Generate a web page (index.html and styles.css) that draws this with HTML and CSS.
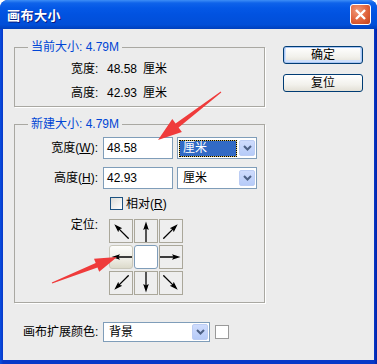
FILE: index.html
```html
<!DOCTYPE html>
<html lang="zh">
<head>
  <meta charset="UTF-8">
  <title>画布大小</title>
  <link rel="stylesheet" href="styles.css">
</head>
<body>

  <div class="window">
    <!-- title bar -->
    <div class="titlebar">
      <span class="title">画布大小</span>
      <span class="close">
        <svg width="13" height="13" viewBox="0 0 13 13"><path d="M2 2L11 11M11 2L2 11" stroke="#fff" stroke-width="2.4"/></svg>
      </span>
    </div>

    <div class="client">
      <!-- current size -->
      <fieldset class="group current">
        <legend>当前大小: 4.79M</legend>
        <div class="info">
          <span>宽度:</span><span>48.58</span><span>厘米</span>
          <span>高度:</span><span>42.93</span><span>厘米</span>
        </div>
      </fieldset>

      <div class="buttons">
        <button class="btn default">确定</button>
        <button class="btn">复位</button>
      </div>

      <!-- new size -->
      <fieldset class="group new">
        <legend>新建大小: 4.79M</legend>
        <div class="form">
          <label>宽度(<u>W</u>):</label>
          <div class="input">48.58</div>
          <div class="select">
            <span class="val hl">厘米</span>
            <span class="drop"><svg width="9" height="6" viewBox="0 0 9 6"><path d="M1 1L4.5 4.5L8 1" fill="none" stroke="#4d6185" stroke-width="2"/></svg></span>
          </div>

          <label>高度(<u>H</u>):</label>
          <div class="input">42.93</div>
          <div class="select">
            <span class="val">厘米</span>
            <span class="drop"><svg width="9" height="6" viewBox="0 0 9 6"><path d="M1 1L4.5 4.5L8 1" fill="none" stroke="#4d6185" stroke-width="2"/></svg></span>
          </div>

          <div class="check-row"><span class="check"></span><span>相对(<u>R</u>)</span></div>

          <label class="anchor-label">定位:</label>
          <div class="anchor">
            <div class="cell"><svg class="nw" viewBox="0 0 22 22"><path d="M0 11H14" stroke="#000" stroke-width="1.3"/><path d="M12 8.2L20.5 11L12 13.8L13.6 11Z"/></svg></div>
            <div class="cell"><svg class="n" viewBox="0 0 22 22"><path d="M0 11H14" stroke="#000" stroke-width="1.3"/><path d="M12 8.2L20.5 11L12 13.8L13.6 11Z"/></svg></div>
            <div class="cell"><svg class="ne" viewBox="0 0 22 22"><path d="M0 11H14" stroke="#000" stroke-width="1.3"/><path d="M12 8.2L20.5 11L12 13.8L13.6 11Z"/></svg></div>
            <div class="cell hover"><svg class="w" viewBox="0 0 22 22"><path d="M0 11H14" stroke="#000" stroke-width="1.3"/><path d="M12 8.2L20.5 11L12 13.8L13.6 11Z"/></svg></div>
            <div class="cell center"></div>
            <div class="cell"><svg class="e" viewBox="0 0 22 22"><path d="M0 11H14" stroke="#000" stroke-width="1.3"/><path d="M12 8.2L20.5 11L12 13.8L13.6 11Z"/></svg></div>
            <div class="cell"><svg class="sw" viewBox="0 0 22 22"><path d="M0 11H14" stroke="#000" stroke-width="1.3"/><path d="M12 8.2L20.5 11L12 13.8L13.6 11Z"/></svg></div>
            <div class="cell"><svg class="s" viewBox="0 0 22 22"><path d="M0 11H14" stroke="#000" stroke-width="1.3"/><path d="M12 8.2L20.5 11L12 13.8L13.6 11Z"/></svg></div>
            <div class="cell"><svg class="se" viewBox="0 0 22 22"><path d="M0 11H14" stroke="#000" stroke-width="1.3"/><path d="M12 8.2L20.5 11L12 13.8L13.6 11Z"/></svg></div>
          </div>
        </div>
      </fieldset>

      <!-- canvas extension colour -->
      <div class="ext-row">
        <span class="ext-label">画布扩展颜色:</span>
        <div class="select wide">
          <span class="val">背景</span>
          <span class="drop"><svg width="9" height="6" viewBox="0 0 9 6"><path d="M1 1L4.5 4.5L8 1" fill="none" stroke="#4d6185" stroke-width="2"/></svg></span>
        </div>
        <span class="swatch"></span>
      </div>
    </div>

    <!-- red annotation arrows -->
    <svg class="marks" width="377" height="364" viewBox="0 0 377 364">
      <polygon points="220.7,91.6 175.6,123.5 172.3,119.1 158,140 181.9,131.9 178.6,127.5 221.3,92.4" />
      <polygon points="51.8,282.5 95.7,262.9 94,258.7 117,257 99.2,271.7 97.5,267.5 52.2,283.5" />
    </svg>
  </div>

</body>
</html>
```

FILE: styles.css
```css
* {
  margin: 0;
  padding: 0;
  box-sizing: border-box;
}

html, body {
  background: #ffffff;
}

body {
  font: 12px/14px "Liberation Sans", "Noto Sans CJK SC", sans-serif;
  color: #000;
}

.window {
  position: relative;
  width: 377px;
  height: 364px;
  display: flex;
  flex-direction: column;
  background: linear-gradient(90deg, #0a4ee0, #0838c8 3px, #0838c8 374px, #0021a8);
  border-radius: 8px 8px 0 0;
  overflow: hidden;
}

/* title bar */
.titlebar {
  flex: none;
  height: 29px;
  display: flex;
  align-items: center;
  justify-content: space-between;
  padding: 0 6px 0 7px;
  background: linear-gradient(#3d8ef6 0, #0f63ea 3px, #0458e6 8px, #0152e0 50%, #014fd8 85%, #0040bc 100%);
}

.title {
  color: #fff;
  font-weight: bold;
  font-size: 13px;
  font-family: "Noto Sans CJK SC", sans-serif;
  text-shadow: 1px 1px 0 #0a1a80;
  letter-spacing: 0.5px;
}

.close {
  width: 21px;
  height: 21px;
  display: flex;
  align-items: center;
  justify-content: center;
  border: 1px solid #fff;
  border-radius: 3px;
  background: radial-gradient(circle at 35% 30%, #f09a7a, #e0623a 55%, #c1401a);
}

/* client area */
.client {
  flex: 1;
  margin: 0 3px 4px;
  background: #ececec;
  padding: 11px 0 0 11px;
  display: grid;
  grid-template-columns: 251px 80px;
  column-gap: 18px;
  align-content: start;
  align-items: start;
}

.group {
  width: 251px;
  margin: 0;
  padding: 0;
  border: 1px solid #a9a8a2;
  box-shadow: 1px 1px 0 #ffffff;
  min-inline-size: 0;
}

.group legend {
  margin-left: 13px;
  padding: 0 3px;
  line-height: 14px;
  color: #0046d5;
}

.current {
  padding: 3px 0 1px;
}

.info {
  display: grid;
  grid-template-columns: 36px 36px auto;
  grid-auto-rows: 24px;
  align-items: center;
  padding-left: 56px;
}

.buttons {
  display: flex;
  flex-direction: column;
  gap: 10px;
  margin-top: 6px;
}

.btn {
  height: 18px;
  width: 80px;
  font: inherit;
  line-height: 14px;
  color: #000;
  border: 1px solid #003c74;
  border-radius: 3px;
  background: linear-gradient(#ffffff, #f2f1ec 60%, #e3e0d6);
}

.btn.default {
  box-shadow: inset 0 0 0 1px #a9c6f4, inset 0 -1px 0 2px #cfe0fb;
}

/* new size */
.new {
  margin-top: 10px;
  padding: 6px 0 7px;
}

.form {
  display: grid;
  grid-template-columns: 84px 70px 80px;
  grid-auto-rows: auto;
  column-gap: 4px;
  row-gap: 8px;
  align-items: center;
}

.form label {
  text-align: right;
  padding-right: 1px;
}

.input {
  height: 22px;
  border: 1px solid #7f9db9;
  background: #fff;
  padding-left: 3px;
  display: flex;
  align-items: center;
}

.select {
  height: 22px;
  border: 1px solid #7f9db9;
  background: #fff;
  padding: 2px 1px 2px 2px;
  display: flex;
  align-items: center;
}

.select .val {
  flex: 1;
  height: 15px;
  padding-left: 3px;
  display: flex;
  align-items: center;
}

.select .val.hl {
  margin-right: 3px;
  background: #316ac5;
  color: #fff;
  box-shadow: 0 0 0 1px #d8c060;
  outline: 1px dotted #000;
}

.drop {
  width: 16px;
  height: 100%;
  display: flex;
  align-items: center;
  justify-content: center;
  border: 1px solid #bccdf4;
  border-radius: 2px;
  background: linear-gradient(#cfdcfd, #b6cbf8);
}

.check-row {
  grid-column: 2 / 4;
  margin-left: 7px;
  display: flex;
  align-items: center;
  gap: 3px;
  height: 13px;
}

.check {
  width: 13px;
  height: 13px;
  border: 1px solid #1c5180;
  background: linear-gradient(135deg, #dcdcd7, #ffffff);
}

.anchor-label {
  align-self: start;
}

.anchor {
  grid-column: 2 / 4;
  margin: 1px 0 0 6px;
  display: grid;
  grid-template-columns: repeat(3, 24px);
  grid-template-rows: repeat(3, 24px);
  column-gap: 1px;
  row-gap: 2px;
}

.cell {
  border: 1px solid #aaa79a;
  background: #eeeeee;
}

.cell svg {
  display: block;
  width: 22px;
  height: 22px;
}

.cell.center {
  background: #fff;
  border-color: #7f9db9;
  border-radius: 3px;
}

.cell.hover {
  border-color: #c9c7ba;
  border-radius: 3px;
  background: linear-gradient(#fdfdfb, #eeede5 60%, #dcdacb);
}

.e { transform: none; }
.w { transform: rotate(180deg); }
.n { transform: rotate(-90deg); }
.s { transform: rotate(90deg); }
.nw { transform: rotate(-135deg); }
.ne { transform: rotate(-45deg); }
.sw { transform: rotate(135deg); }
.se { transform: rotate(45deg); }

/* bottom row */
.ext-row {
  grid-column: 1 / -1;
  margin-top: 19px;
  padding-left: 9px;
  display: flex;
  align-items: center;
}

.ext-label {
  width: 80px;
}

.select.wide {
  width: 107px;
  height: 20px;
  padding: 1px 1px 1px 2px;
}

.swatch {
  width: 14px;
  height: 14px;
  margin-left: 5px;
  border: 1px solid #9a9a9a;
  background: #fff;
}

/* annotation overlay */
.marks {
  position: absolute;
  left: 0;
  top: 0;
  pointer-events: none;
}

.marks polygon {
  fill: #ef3b3b;
}
```
